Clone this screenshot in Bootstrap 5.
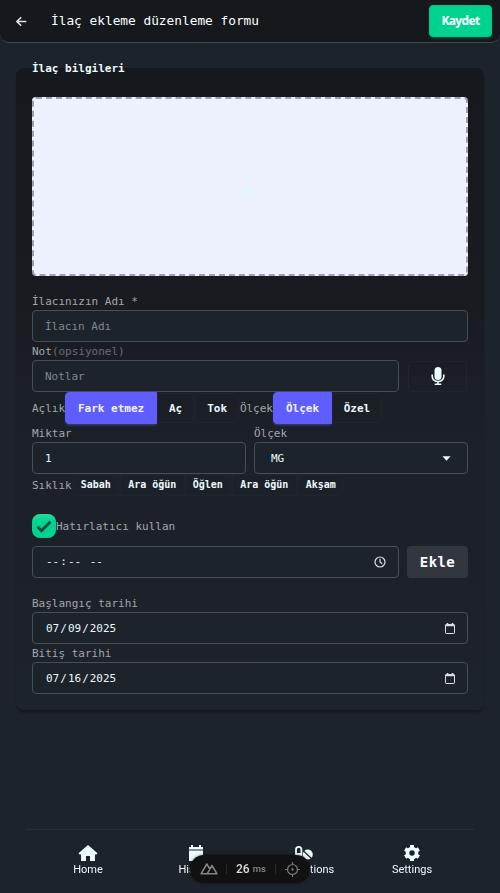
<!DOCTYPE html>
<html lang="tr" data-bs-theme="dark">
<head>
<meta charset="utf-8">
<meta name="viewport" content="width=device-width, initial-scale=1">
<title>İlaç ekleme düzenleme formu</title>
<link href="https://cdn.jsdelivr.net/npm/bootstrap@5.3.0/dist/css/bootstrap.min.css" rel="stylesheet">
<style>
body{background:#1d232a;color:#ecf9ff;font:11px/18px "DejaVu Sans Mono","Liberation Mono",monospace;height:893px;overflow:hidden}
.topbar{height:43px;background:#15191e;border-bottom:1px solid #414b58;border-radius:0 0 9px 9px;padding:0 8px 0 14px}
.topbar h1{font-size:12.8px;line-height:20px;font-weight:400;margin-left:22px}
.save{width:63px;height:32px;background:#00d390;color:#fff;font:700 12px/30px "Noto Sans","Open Sans",sans-serif;letter-spacing:-.65px;border-radius:4px;border:1px solid #00c687;box-shadow:0 2px 3px -1px #00d39066;padding:0}
.save:hover{background:#00c084;color:#fff}
.panel{display:flow-root;margin:25px 16px 0;height:642px;padding:0 16px;border-radius:8px;background:linear-gradient(#15191e,#181c21 35%,#1c2028 60%,#1d232a);box-shadow:0 3px 3px -1px #0006}
.panel legend{font-size:11px;font-weight:700;line-height:18px;margin:-8px 0 19px;float:none}
.drop{height:179px;border:2px dashed #9ca0af;border-radius:4px;background:#edf1fe;color:#e2f6ff;margin-bottom:16px}
.cap{color:#a0a7ad;height:18px;line-height:19px;white-space:nowrap}
.dim{color:#656c75}
.field,.field:focus{height:32px;background:#1d232a;border:1px solid #464e57;border-radius:4px;color:#ecf9ff;font-size:11px;padding:0 12px;line-height:30px;box-shadow:none}
.field::placeholder{color:#7f8890;opacity:1}
.ghost{border:1px solid #20252c;background:transparent;color:#ecf9ff;border-radius:0;font-weight:700;font-size:11px;line-height:1;padding:0}
.mic{width:59px;height:31px;border-radius:4px;margin:0 1px 0 9px}
.pick{background:#605dff;border-color:#605dff;color:#edf1fe;height:32px;box-shadow:0 2px 3px -1px #605dff88;border-radius:4px 0 0 4px}
.seg .btn:not(.pick){height:30px}
.freq .btn{font-size:10px;height:22px;border-radius:0;flex:none}
.remind{margin-top:18px}
.tick{width:24px;height:24px;border-radius:8px;background:linear-gradient(#24dba0,#00d390 35%)}
.add{width:61px;height:32px;background:#32373f;color:#fff;font-size:14px;font-weight:700;letter-spacing:.4px;border-radius:4px;padding:0;border:0;margin-left:8px}
.part{padding:0 1px}
.stamp{padding-top:1px}
.dock{height:64px;margin:0 26px;border-top:1px solid #282e35;padding:14px 8px 0;bottom:0;left:0;right:0;font:400 11px/12px Roboto,sans-serif}
.dock a{width:108px;color:#ecf9ff;text-decoration:none}
.dock svg{display:block;margin:0 auto;height:20px;width:20px}
.tools{left:190px;bottom:10px;width:120px;height:28px;background:#111;color:#ddd;border-radius:14px;box-shadow:0 0 3px #0008;font:500 12px/28px Roboto,sans-serif;padding:0 10px}
.rule{width:1px;height:10px;background:#292929}
</style>
<script src="https://cdn.jsdelivr.net/npm/bootstrap@5.3.0/dist/js/bootstrap.bundle.min.js"></script>
</head>
<body>
<header class="topbar d-flex align-items-center">
  <svg width="15" height="15" viewBox="0 0 15 15" fill="none" stroke="#dce6ec" stroke-width="1.6"><path d="M12.300 7.500H3M7.200 3.200 2.900 7.500l4.300 4.300"/></svg>
  <h1 class="mb-0">İlaç ekleme düzenleme formu</h1>
  <button class="btn save ms-auto" type="button">Kaydet</button>
</header>
<main>
<form class="panel">
  <legend>İlaç bilgileri</legend>
  <div class="drop d-flex align-items-center justify-content-center pt-1"><svg class="mt-1" width="18" height="18" viewBox="0 0 18 18" stroke="currentColor" stroke-width="3"><path d="M9 0v18M0 9h18"/></svg></div>
  <div class="cap">İlacınızın Adı *</div>
  <input class="form-control field" placeholder="İlacın Adı" aria-label="İlacın Adı">
  <div class="cap"><span>Not</span><span class="dim">(opsiyonel)</span></div>
  <div class="d-flex align-items-center">
    <input class="form-control field" placeholder="Notlar" aria-label="Notlar">
    <button class="btn ghost mic flex-shrink-0 d-flex align-items-center justify-content-center" type="button" aria-label="Mikrofon">
      <svg width="14" height="20" viewBox="0 0 14 20" fill="none" stroke="#ecf9ff" stroke-width="1.600"><rect x="3.500" y="1" width="7" height="13" rx="3.500" fill="#ecf9ff" stroke="none"/><path d="M1.200 8.500v2a5.800 5 0 0 0 11.600 0v-2M7 15.500v3M3.700 18.200h6.600"/></svg>
    </button>
  </div>
  <div class="seg d-flex align-items-center">
    <span class="cap">Açlık</span>
    <button class="btn ghost pick" type="button" style="width:92px">Fark etmez</button>
    <button class="btn ghost" type="button" style="width:37px">Aç</button>
    <button class="btn ghost rounded-end" type="button" style="width:44px;margin-left:1px">Tok</button>
    <span class="cap ms-auto">Ölçek</span>
    <button class="btn ghost pick" type="button" style="width:59px">Ölçek</button>
    <button class="btn ghost rounded-end" type="button" style="width:50px;margin-right:86px">Özel</button>
  </div>
  <div class="row gx-2">
    <div class="col-6"><div class="cap">Miktar</div><input class="form-control field" value="1" aria-label="Miktar"></div>
    <div class="col-6"><div class="cap">Ölçek</div><div class="field stamp d-flex align-items-center justify-content-between px-3"><span>MG</span><svg width="9" height="5" viewBox="0 0 9 5" fill="#ecf9ff"><path d="M.5.3h8L4.500 4.700z"/></svg></div></div>
  </div>
  <div class="freq d-flex align-items-center">
    <span class="cap">Sıklık</span>
    <button class="btn ghost" type="button" style="width:46px;margin-left:1px">Sabah</button>
    <button class="btn ghost" type="button" style="width:65px;margin-left:1px">Ara öğün</button>
    <button class="btn ghost" type="button" style="width:46px">Öğlen</button>
    <button class="btn ghost" type="button" style="width:65px;margin-left:1px">Ara öğün</button>
    <button class="btn ghost rounded-end" type="button" style="width:46px;margin-left:1px">Akşam</button>
  </div>
  <div class="remind d-flex align-items-center mb-2">
    <span class="tick d-flex align-items-center justify-content-center"><svg width="16" height="13" viewBox="0 0 16 13" fill="none" stroke="#004c39" stroke-width="2.800"><path d="m1.500 6.800 4 4L14.400 1.700"/></svg></span>
    <span class="cap">Hatırlatıcı kullan</span>
  </div>
  <div class="d-flex mb-3">
    <div class="field flex-grow-1 d-flex align-items-center justify-content-between"><span><span class="part">--</span>:<span class="part">--</span> <span class="part">--</span></span>
      <svg width="12" height="12" viewBox="0 0 12 12" fill="none" stroke="#dedfe0" stroke-width="1.200"><circle cx="6" cy="6" r="5"/><path d="M6 2.800V6l2.300 1.700"/></svg></div>
    <button class="btn add" type="button">Ekle</button>
  </div>
  <div class="cap">Başlangıç tarihi</div>
  <div class="field d-flex align-items-center justify-content-between"><span class="stamp"><span class="part">07</span>/<span class="part">09</span>/<span class="part">2025</span></span><svg width="10" height="11" viewBox="0 0 10 11" fill="none" stroke="#dedfe0"><rect x=".5" y="1.500" width="9" height="9" rx=".7"/><path d="M.5 2.500h9M2.500 0v2M7.500 0v2" stroke-width="1.600"/></svg></div>
  <div class="cap">Bitiş tarihi</div>
  <div class="field d-flex align-items-center justify-content-between"><span class="stamp"><span class="part">07</span>/<span class="part">16</span>/<span class="part">2025</span></span><svg width="10" height="11" viewBox="0 0 10 11" fill="none" stroke="#dedfe0"><rect x=".5" y="1.500" width="9" height="9" rx=".7"/><path d="M.5 2.500h9M2.500 0v2M7.500 0v2" stroke-width="1.600"/></svg></div>
</form>
</main>
<nav class="dock position-fixed d-flex text-center">
  <a href="#"><svg viewBox="0 0 20 20" fill="currentColor"><path d="m10 1 9.500 8.300-1 1.200H17V17h-5v-5H8v5H3v-6.500H1.500l-1-1.200z"/></svg>Home</a>
  <a href="#"><svg viewBox="0 0 20 20" fill="currentColor"><path d="M3 3h2V1h2v2h6V1h2v2h2v2.500H3zM3 6.500h14V17H3z"/></svg>History</a>
  <a href="#"><svg viewBox="0 0 20 20"><path d="M2 13V5.500a2.700 2.700 0 0 1 5.400 0V13z" fill="none" stroke="currentColor" stroke-width="1.800"/><path d="M2 9h5.400v7H2z" fill="currentColor"/><circle cx="13.800" cy="10.500" r="5" fill="currentColor"/><path d="m9.500 7 8.500 8" stroke="#1d232a" stroke-width="1.200"/></svg>Medications</a>
  <a href="#"><svg viewBox="0 0 20 20"><circle cx="10" cy="9" r="4.500" fill="none" stroke="currentColor" stroke-width="3.600"/><path d="M10 1v3.500M10 13.500V17M3.100 5l3 1.800M13.900 11.200l3 1.800M3.100 13l3-1.800M13.900 6.800l3-1.800" stroke="currentColor" stroke-width="4"/></svg>Settings</a>
</nav>
<div class="tools position-fixed d-flex align-items-center">
  <svg width="18" height="12" viewBox="0 0 18 12" fill="none" stroke="#858585" stroke-width="1.500" stroke-linejoin="round"><path d="M9.500 11H1L6.800 1.200l3.300 5.500M9.500 11h7.500l-5-8.300-4.900 8.300z" transform="translate(0 -.2)"/></svg>
  <span class="rule" style="margin-left:8px"></span>
  <span style="margin-left:9px">26</span><small style="color:#888;font-size:9.500px;margin-left:3px">ms</small>
  <span class="rule" style="margin-left:9px"></span>
  <svg class="ms-auto" width="15" height="15" viewBox="0 0 15 15" fill="none" stroke="#777" stroke-width="1.200"><circle cx="7.500" cy="7.500" r="5"/><path d="M7.500 0v3.300M7.500 11.700V15M0 7.500h3.300M11.700 7.500H15"/><circle cx="7.500" cy="7.500" r=".6"/></svg>
</div>
</body>
</html>
